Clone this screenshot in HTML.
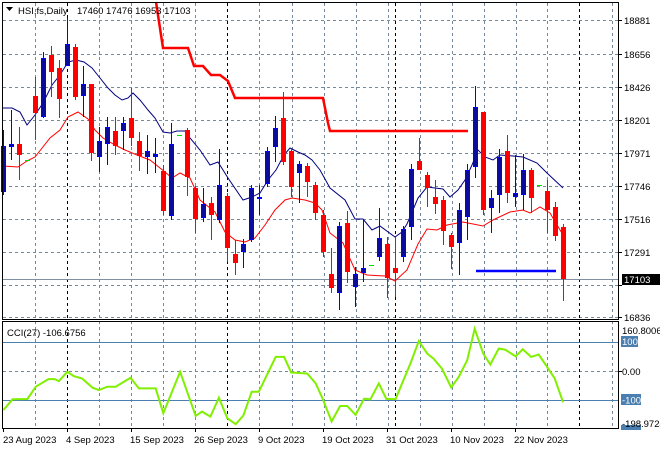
<!DOCTYPE html>
<html><head><meta charset="utf-8"><style>
html,body{margin:0;padding:0;background:#fff;}
svg{display:block;}
text{font-family:"Liberation Sans",sans-serif;font-size:9.5px;fill:#000;}
</style></head><body>
<svg width="660" height="450" viewBox="0 0 660 450" xmlns="http://www.w3.org/2000/svg">
<rect width="660" height="450" fill="#fff"/>
<g stroke="#778899" stroke-width="1" stroke-dasharray="3,3" fill="none">
<path d="M3 20.5H618M3 54.5H618M3 87.5H618M3 120.5H618M3 153.5H618M3 186.5H618M3 219.5H618M3 252.5H618M3 285.5H618M3 317.5H618"/>
<path d="M35.5 3V428M99.5 3V428M131.5 3V428M163.5 3V428M195.5 3V428M259.5 3V428M292.5 3V428M324.5 3V428M356.5 3V428M388.5 3V428M420.5 3V428M452.5 3V428M484.5 3V428M516.5 3V428M547.5 3V428M612.5 3V428"/>
<path d="M3 371.5H618"/>
</g>
<g stroke="#000" stroke-width="1" stroke-dasharray="3,3" fill="none">
<path d="M67.5 3V428M227.5 3V428M395.5 3V428M579.5 3V428"/>
</g>
<path d="M3 279.5H618" stroke="#8090a0" stroke-width="1"/>
<path d="M156 2L163 48L188 48L194 66L203 66L211 75L220 75L228 81L235 98L323 98L328 123L330 131L468 131" stroke="#ff0000" stroke-width="2.5" fill="none"/>
<path d="M476 271H556" stroke="#0000ff" stroke-width="2.5"/>
<polyline fill="none" stroke="#000080" stroke-width="1" points="3,108 12,108 20,112 27,125 35,115 43,103 52,85 60,75 68,62 76,60 84,62 92,68 100,78 108,88 115,95 122,100 128,98 133,93 140,100 148,110 155,118 163,132 170,133 177,131 185,131 190,138 200,150 210,165 218,162 228,178 243,200 252,197 260,193 268,180 276,170 284,155 290,148 298,152 305,155 312,160 320,170 330,188 345,200 355,219 363,219 372,230 380,226 395,237 402,232 407,224 418,198 427,187 443,189 450,197 458,190 465,180 472,165 478,150 485,157 493,160 500,155 513,156 523,157 537,163 547,173 563,188"/>
<polyline fill="none" stroke="#ff0000" stroke-width="1" points="3,166 18,167 27,161 35,157 50,138 60,130 68,117 78,112 88,119 95,130 103,138 115,145 125,150 137,155 150,160 165,172 172,178 180,173 190,178 200,200 215,212 225,232 235,240 245,242 255,238 265,225 275,210 285,200 292,198 305,200 315,203 322,210 330,233 343,243 355,270 367,275 385,276 395,281 407,270 418,244 427,229 437,230 447,225 463,222 483,226 493,220 510,212 523,210 530,213 540,207 550,213 563,235"/>
<g stroke-width="1">
<g stroke="#0000ff" fill="#0c0c9c">
<path d="M3.5 130V195M11.5 110V160M43.5 52V118M67.5 18V66M83.5 66V117M99.5 127V172M107.5 117V165M123.5 117V150M147.5 135V174M155.5 138V173M171.5 123V220M203.5 188V222M219.5 149V223M243.5 239V268M251.5 185V242M259.5 185V215M267.5 147V187M275.5 116V162M299.5 161V203M339.5 222V310M355.5 267V307M363.5 220V282M379.5 208V261M403.5 226V262M411.5 164V240M459.5 203V275M467.5 164V240M475.5 86V178M491.5 190V233M499.5 149V213M515.5 155V207M523.5 154V210"/>
<rect x="1.5" y="146.5" width="4" height="45"/>
<rect x="9.5" y="144.5" width="4" height="2"/>
<rect x="41.5" y="58.5" width="4" height="58"/>
<rect x="65.5" y="44.5" width="4" height="21"/>
<rect x="81.5" y="84.5" width="4" height="11"/>
<rect x="97.5" y="141.5" width="4" height="15"/>
<rect x="105.5" y="127.5" width="4" height="16"/>
<rect x="121.5" y="123.5" width="4" height="7"/>
<rect x="145.5" y="151.5" width="4" height="5"/>
<rect x="153.5" y="154.5" width="4" height="2"/>
<rect x="169.5" y="144.5" width="4" height="71"/>
<rect x="201.5" y="204.5" width="4" height="13"/>
<rect x="217.5" y="185.5" width="4" height="34"/>
<rect x="241.5" y="244.5" width="4" height="7"/>
<rect x="249.5" y="188.5" width="4" height="51"/>
<rect x="257.5" y="197.5" width="4" height="1"/>
<rect x="265.5" y="151.5" width="4" height="32"/>
<rect x="273.5" y="128.5" width="4" height="18"/>
<rect x="297.5" y="164.5" width="4" height="8"/>
<rect x="337.5" y="226.5" width="4" height="66"/>
<rect x="353.5" y="274.5" width="4" height="12"/>
<rect x="361.5" y="268.5" width="4" height="4"/>
<rect x="377.5" y="238.5" width="4" height="18"/>
<rect x="401.5" y="229.5" width="4" height="27"/>
<rect x="409.5" y="169.5" width="4" height="57"/>
<rect x="457.5" y="210.5" width="4" height="32"/>
<rect x="465.5" y="170.5" width="4" height="46"/>
<rect x="473.5" y="107.5" width="4" height="59"/>
<rect x="489.5" y="198.5" width="4" height="9"/>
<rect x="497.5" y="157.5" width="4" height="37"/>
<rect x="513.5" y="193.5" width="4" height="3"/>
<rect x="521.5" y="170.5" width="4" height="24"/>
</g>
<g stroke="#ff0000" fill="#ff0000">
<path d="M19.5 127V180M35.5 77V140M51.5 46V97M59.5 60V118M75.5 44V100M91.5 84V161M115.5 117V155M131.5 88V146M139.5 132V171M163.5 165V215M187.5 128V196M195.5 186V233M211.5 197V240M227.5 193V262M235.5 240V275M283.5 92V165M291.5 149V197M307.5 163V197M315.5 182V220M323.5 210V257M331.5 248V293M347.5 211V283M387.5 237V298M395.5 237V297M419.5 138V170M427.5 172V207M435.5 180V214M443.5 196V245M451.5 233V269M483.5 112V215M507.5 135V203M531.5 168V213M547.5 180V233M555.5 202V241M563.5 224V301"/>
<rect x="17.5" y="144.5" width="4" height="10"/>
<rect x="33.5" y="96.5" width="4" height="16"/>
<rect x="49.5" y="55.5" width="4" height="16"/>
<rect x="57.5" y="68.5" width="4" height="30"/>
<rect x="73.5" y="47.5" width="4" height="49"/>
<rect x="89.5" y="84.5" width="4" height="68"/>
<rect x="113.5" y="131.5" width="4" height="14"/>
<rect x="129.5" y="118.5" width="4" height="19"/>
<rect x="137.5" y="141.5" width="4" height="14"/>
<rect x="161.5" y="171.5" width="4" height="39"/>
<rect x="185.5" y="130.5" width="4" height="46"/>
<rect x="193.5" y="188.5" width="4" height="30"/>
<rect x="209.5" y="203.5" width="4" height="11"/>
<rect x="225.5" y="196.5" width="4" height="51"/>
<rect x="233.5" y="254.5" width="4" height="8"/>
<rect x="281.5" y="118.5" width="4" height="43"/>
<rect x="289.5" y="151.5" width="4" height="35"/>
<rect x="305.5" y="166.5" width="4" height="15"/>
<rect x="313.5" y="185.5" width="4" height="27"/>
<rect x="321.5" y="215.5" width="4" height="36"/>
<rect x="329.5" y="274.5" width="4" height="13"/>
<rect x="345.5" y="223.5" width="4" height="48"/>
<rect x="385.5" y="244.5" width="4" height="33"/>
<rect x="393.5" y="268.5" width="4" height="4"/>
<rect x="417.5" y="161.5" width="4" height="8"/>
<rect x="425.5" y="175.5" width="4" height="12"/>
<rect x="433.5" y="197.5" width="4" height="6"/>
<rect x="441.5" y="200.5" width="4" height="30"/>
<rect x="449.5" y="235.5" width="4" height="11"/>
<rect x="481.5" y="112.5" width="4" height="97"/>
<rect x="505.5" y="151.5" width="4" height="41"/>
<rect x="529.5" y="170.5" width="4" height="27"/>
<rect x="545.5" y="191.5" width="4" height="18"/>
<rect x="553.5" y="207.5" width="4" height="28"/>
<rect x="561.5" y="227.5" width="4" height="51"/>
</g>
<g stroke="#00dd00"><path d="M25 160.5H30M177 135.5H182M369 265.5H374M537 185.5H542"/></g>
</g>
<path d="M3 342.5H618M3 400.5H618" stroke="#4a7fb0" stroke-width="1"/>
<polyline fill="none" stroke="#80f000" stroke-width="2" points="3.4,410 12.6,399.3 27.4,399 35.8,386.7 48.4,379.1 54.7,379.1 58.9,381.1 67.3,371.8 73.7,376.1 82.1,378.5 92.6,387.7 98.9,390.1 107.3,386.7 115.7,386.7 130.5,377.8 138.9,388.4 155.7,388.4 163.3,413.3 180.1,371.8 195.7,415.9 202,411.6 210.4,416.6 218.9,397.7 227.3,418.2 235.7,424.2 243.3,415.6 251.7,391.7 258.8,391.7 275.7,356.9 284.1,356.9 291.2,372.5 307.2,373.5 315.7,383.4 323.2,400 331.6,421.5 340.1,406 347.2,406 355.6,414.9 364.1,398.7 370.4,399.3 378.8,383.4 386.4,399 395.6,399 410.4,363.5 418.8,341 427.2,353.6 433.5,358.6 441.9,368.5 451.2,387.4 458.8,376.8 467.2,360.2 474.7,328.7 483.2,353.6 490.3,364.5 498.7,348.6 505.1,349.6 515.6,356.3 522.7,349.3 531.1,356.9 538.7,354.6 547.1,366.9 554.7,378.5 563.1,402.3"/>
<rect x="0" y="319" width="660" height="3" fill="#fff"/>
<rect x="2.5" y="2.5" width="616" height="317" fill="none" stroke="#000" stroke-width="1"/>
<rect x="2.5" y="321.5" width="616" height="107" fill="none" stroke="#000" stroke-width="1"/>
<g stroke="#000"><path d="M619 20.5H622M619 54.5H622M619 87.5H622M619 120.5H622M619 153.5H622M619 186.5H622M619 219.5H622M619 252.5H622M619 285.5H622M619 317.5H622M619 371.5H622"/></g>
<g>
<text x="624" y="24">18881</text>
<text x="624" y="58">18656</text>
<text x="624" y="91">18426</text>
<text x="624" y="124">18201</text>
<text x="624" y="157">17971</text>
<text x="624" y="190">17746</text>
<text x="624" y="223">17516</text>
<text x="624" y="256">17291</text>
<text x="624" y="321">16836</text>
</g>
<rect x="622" y="274" width="38" height="11" fill="#000"/>
<text x="624" y="283" style="fill:#fff">17103</text>
<text x="622" y="334">160.8006</text>
<rect x="621" y="336" width="17" height="11" fill="#4a7fb0"/>
<text x="622" y="345" style="fill:#fff">100</text>
<text x="622" y="375">0.00</text>
<rect x="621" y="394" width="20" height="11" fill="#4a7fb0"/>
<text x="622" y="403.5" style="fill:#fff">-100</text>
<rect x="621" y="425" width="20" height="5" fill="#4a7fb0"/>
<text x="622" y="427">-198.9724</text>
<path d="M6 7H13L9.5 11Z" fill="#000"/>
<text x="18" y="14">HSI,fs,Daily</text>
<text x="77" y="14">17460 17476 16953 17103</text>
<text x="7" y="336">CCI(27) -106.6756</text>
<g>
<text x="3" y="443">23 Aug 2023</text>
<text x="66" y="443">4 Sep 2023</text>
<text x="130" y="443">15 Sep 2023</text>
<text x="194" y="443">26 Sep 2023</text>
<text x="258" y="443">9 Oct 2023</text>
<text x="322" y="443">19 Oct 2023</text>
<text x="386" y="443">31 Oct 2023</text>
<text x="450" y="443">10 Nov 2023</text>
<text x="514" y="443">22 Nov 2023</text>
</g>
<g stroke="#000"><path d="M3.5 429V432M67.5 429V432M131.5 429V432M195.5 429V432M259.5 429V432M323.5 429V432M387.5 429V432M451.5 429V432M515.5 429V432"/></g>
</svg>
</body></html>
